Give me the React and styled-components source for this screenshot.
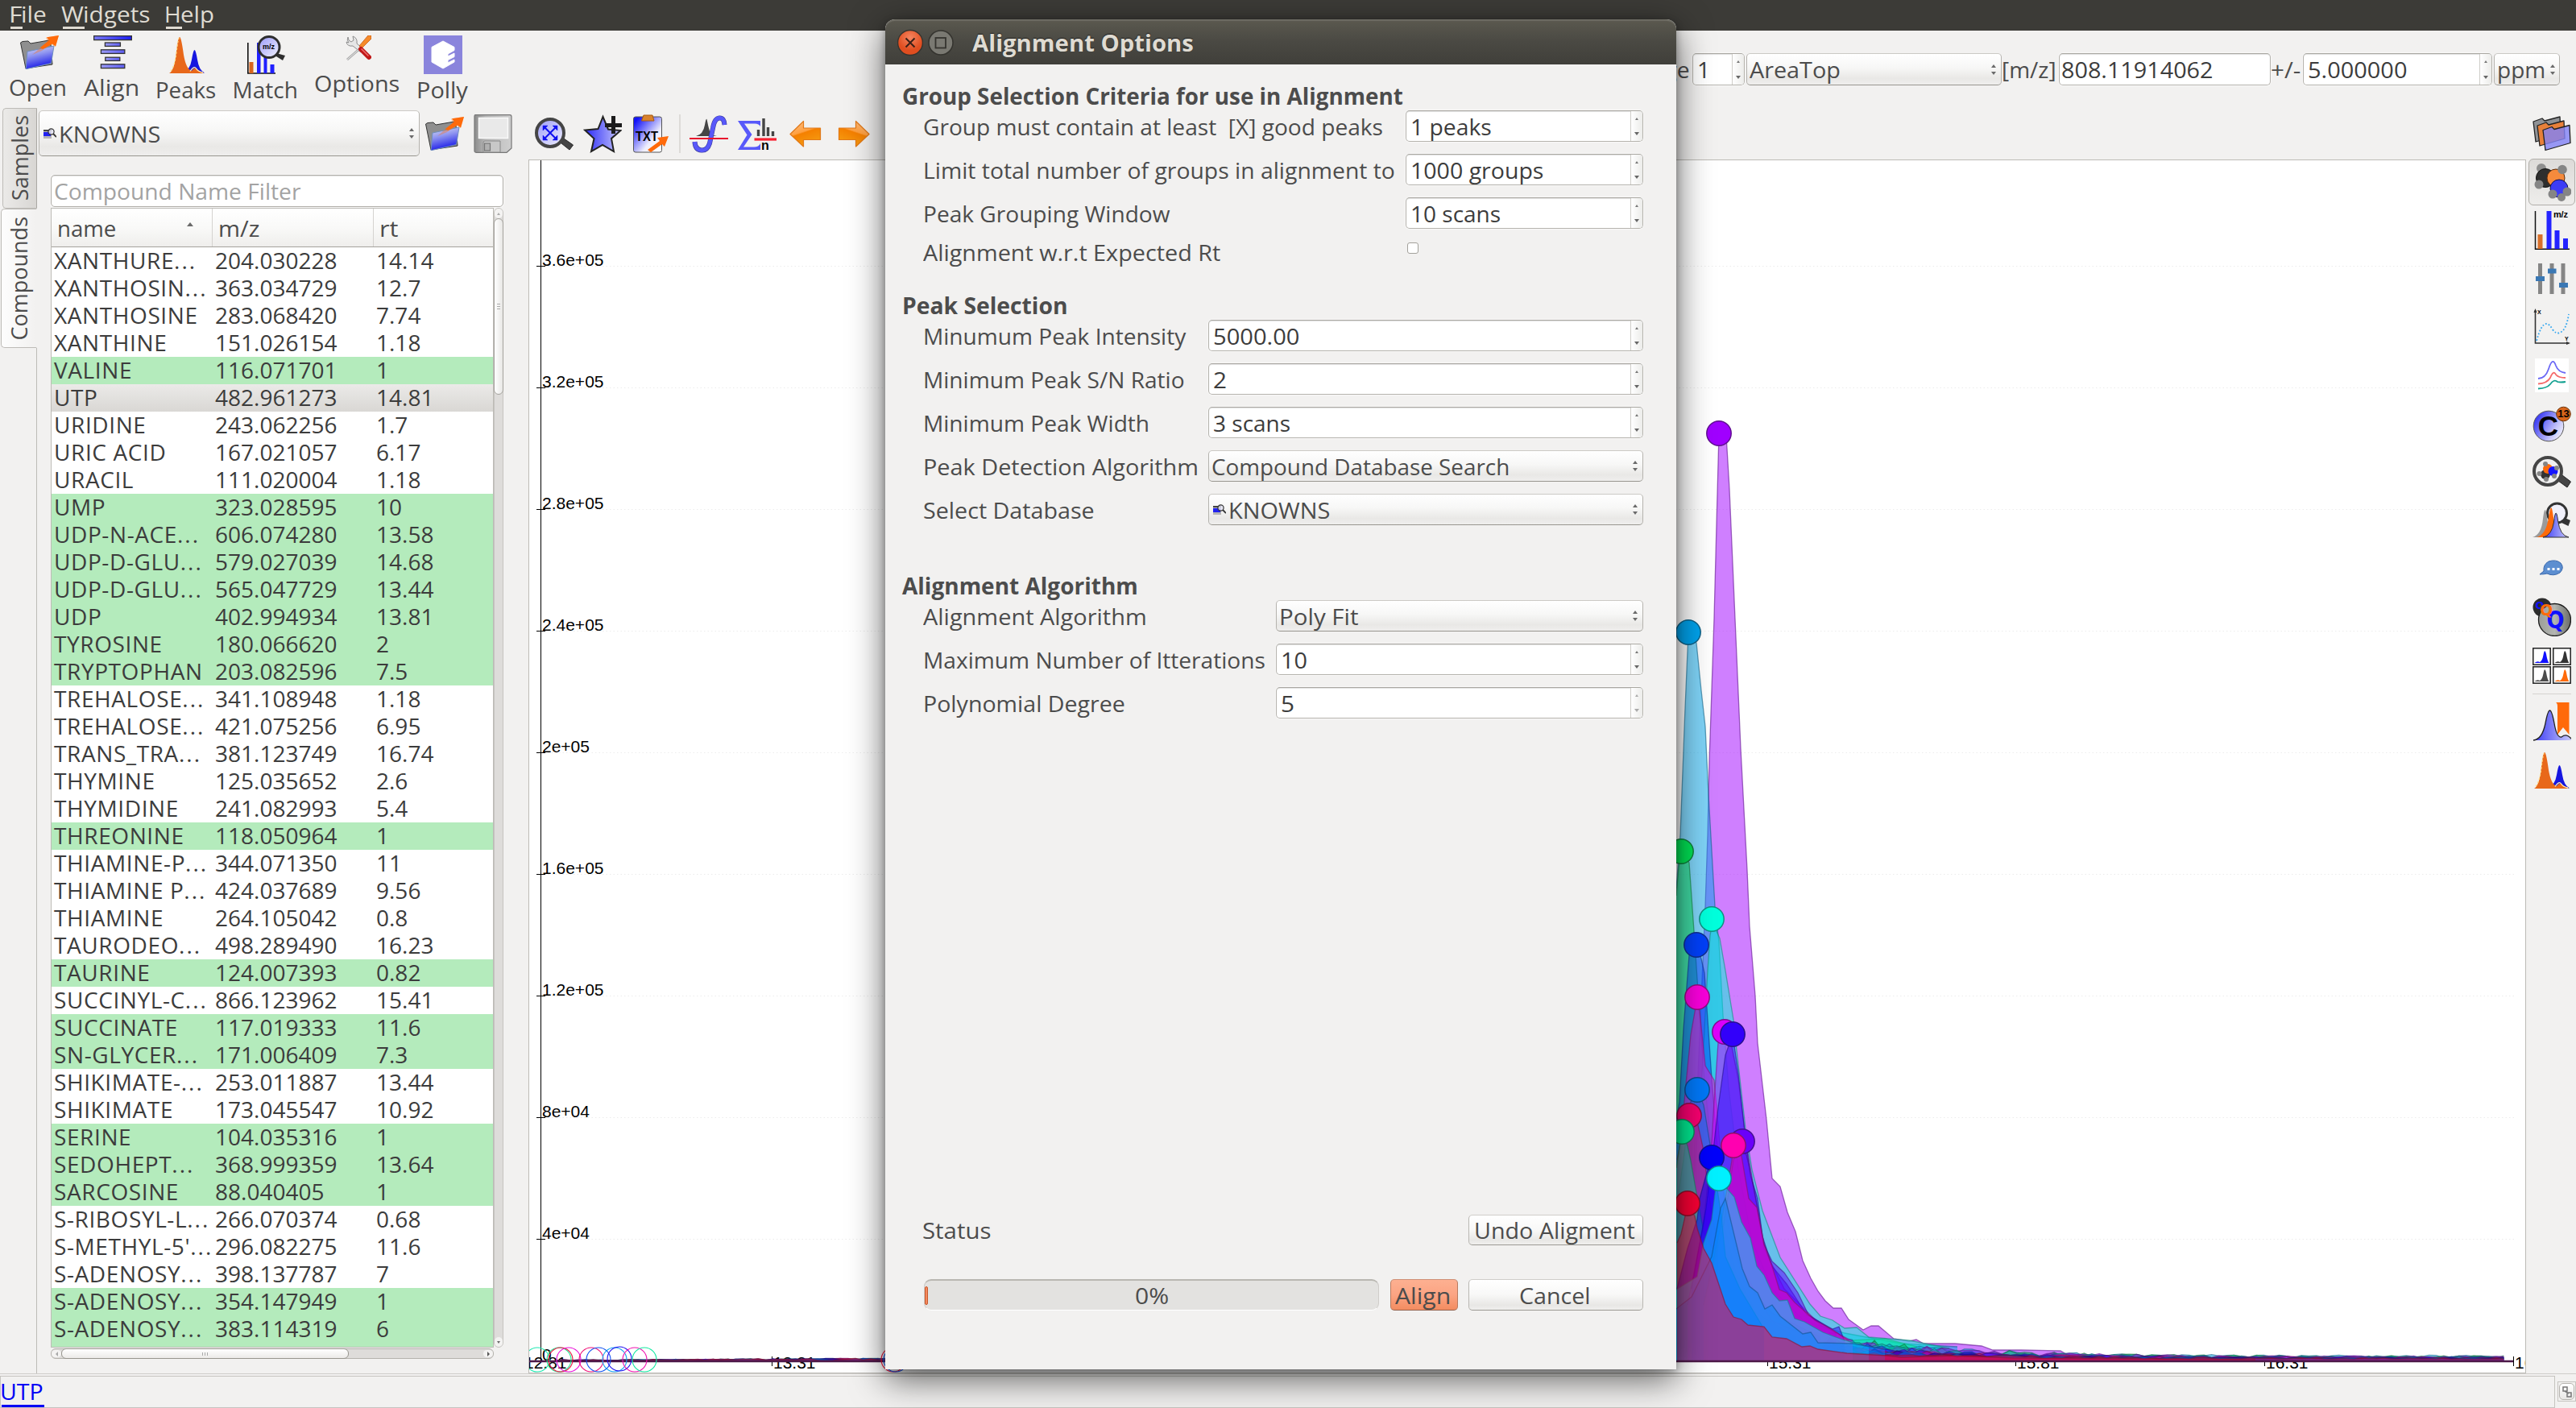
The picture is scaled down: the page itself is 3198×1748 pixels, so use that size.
import React, { useLayoutEffect, useRef, useState } from "react";
import styled, { createGlobalStyle, css } from "styled-components";

const UI_FONT = `"Open Sans", "Noto Sans", sans-serif`;

const GlobalStyle = createGlobalStyle`
  html, body { margin: 0; padding: 0; background: #f2f1f0; }
  *, *::before, *::after { box-sizing: border-box; }
`;

/* ---------- text that is condensed or widened to a fixed measure ---------- */

const FitBox = styled.span`
  display: block;
  flex: none;
  width: ${(p) => p.$w}px;
  white-space: pre;
`;
const FitInner = styled.span`
  display: inline-block;
  margin-left: -2px;
  transform-origin: 0 50%;
`;
function Fit({ w, children }) {
  const ref = useRef(null);
  const [scale, setScale] = useState(1);
  useLayoutEffect(() => {
    const natural = ref.current.offsetWidth;
    if (natural) setScale((w + 1) / natural);
  }, [w, children]);
  return (
    <FitBox $w={w}>
      <FitInner ref={ref} style={{ transform: `scaleX(${scale})` }}>{children}</FitInner>
    </FitBox>
  );
}

/* ---------- shell ---------- */

const Window = styled.div`
  position: relative;
  width: 3198px;
  height: 1748px;
  overflow: hidden;
  display: flex;
  flex-direction: column;
  background: #f2f1f0;
  color: #4c4c4c;
  font: 28px/36px ${UI_FONT};
`;
const MenuBar = styled.div`
  height: 38px;
  flex: none;
  display: flex;
  gap: 19px;
  padding-left: 13px;
  background: #3c3b37;
  color: #dfdbd2;
  line-height: 35px;
`;
const MenuItem = styled.div`
  display: flex;
  height: 38px;
`;
const Mnemonic = styled.div`
  border-bottom: 3px solid #dfdbd2;
  height: 36px;
`;
const TopBar = styled.div`
  height: 96px;
  flex: none;
  display: flex;
  justify-content: space-between;
`;
const Actions = styled.div`
  display: flex;
  gap: 21.500px;
  padding: 6px 0 0 13px;
`;
const ActionItem = styled.div`
  display: flex;
  flex-direction: column;
  align-items: center;
  gap: ${(p) => p.$gap}px;
`;
const Controls = styled.div`
  display: flex;
  padding: 28px 20px 0 0;
  height: 68px;
  align-items: center;
  gap: 2px;
`;
const Body = styled.div`
  flex: 1;
  display: flex;
  min-height: 0;
`;

/* ---------- form controls ---------- */

const Field = styled.div`
  display: flex;
  flex: none;
  width: ${(p) => (p.$w ? p.$w + "px" : "auto")};
  height: ${(p) => p.$h || 40}px;
  padding-left: ${(p) => p.$pad || 7}px;
  align-items: center;
  justify-content: space-between;
  background: #fff;
  color: #3c3c3c;
  border: 1px solid #b5b3ad;
  border-top-color: #a9a7a1;
  border-radius: 5px;
  box-shadow: 0 0 0 1px rgba(255, 255, 255, 0.5), inset 0 1px 1px rgba(0, 0, 0, 0.12);
`;
const StepBox = styled.div`
  width: 15px;
  height: 100%;
  flex: none;
  display: flex;
  flex-direction: column;
  align-items: center;
  justify-content: space-between;
  padding: 8px 0 7px;
  border-left: 1px solid #cfcdc9;
  border-radius: 0 4px 4px 0;
  background: linear-gradient(90deg, #fff, #ececea);
`;
const Tri = styled.i`
  width: 0;
  height: 0;
  border: ${(p) => p.$s || 3}px solid transparent;
  ${(p) => (p.$down
    ? css`border-bottom-width: 0; border-top: ${(p.$s || 3) + 1}px solid ${p.$c || "#6a6a6a"};`
    : css`border-top-width: 0; border-bottom: ${(p.$s || 3) + 1}px solid ${p.$c || "#6a6a6a"};`)}
`;
const Combo = styled.div`
  display: flex;
  flex: none;
  align-items: center;
  width: ${(p) => (p.$w ? p.$w + "px" : "auto")};
  height: ${(p) => p.$h || 40}px;
  padding: 0 ${(p) => p.$padR || 6}px 0 5px;
  gap: 5px;
  border: 1px solid #bdbbb6;
  border-color: #cbc9c5 #b5b3ae #98968f;
  border-radius: 5px;
  background: linear-gradient(#fff, #f7f7f6 45%, #e9e8e6 80%, #efeeed);
`;
const ComboArrows = styled.div`
  margin-left: auto;
  display: flex;
  flex-direction: column;
  gap: 5px;
`;
const Arrows = () => (
  <ComboArrows><Tri /><Tri $down /></ComboArrows>
);
function Spin({ w, h, dim, pad, children }) {
  return (
    <Field $w={w} $h={h} $pad={pad}>
      {children}
      <StepBox>
        <Tri $s={2} $c={dim ? "#aaa" : "#777"} />
        <Tri $down $c={dim ? "#aaa" : "#666"} />
      </StepBox>
    </Field>
  );
}
const Push = styled.button`
  display: flex;
  align-items: center;
  justify-content: center;
  width: ${(p) => p.$w}px;
  height: ${(p) => p.$h}px;
  padding: 0;
  font: inherit;
  color: inherit;
  text-align: left;
  border: 1px solid;
  border-radius: 5px;
  ${(p) => (p.$primary
    ? css`border-color: #cf8f76 #b87a60 #93624e; background: linear-gradient(#fdb091, #fba483 50%, #f38c60);`
    : css`border-color: #cfcdc9 #b9b7b2 #9b9993; background: linear-gradient(#fff, #f8f8f7 50%, #e8e7e5 85%, #f0efee);`)}
`;

/* ---------- icons ---------- */

const Svg = ({ w = 48, h = 48, box, children }) => (
  <svg width={w} height={h} viewBox={box || `0 0 ${w} ${h}`} style={{ display: "block", flex: "none" }}>{children}</svg>
);
const Defs = () => (
  <svg width="0" height="0" style={{ position: "absolute" }}>
    <defs>
      <linearGradient id="blueUp" x1="0" y1="0" x2="0.3" y2="1"><stop offset="0" stopColor="#dfe3f6" /><stop offset="0.45" stopColor="#8f95f0" /><stop offset="1" stopColor="#1a1ae8" /></linearGradient>
      <linearGradient id="bar" x1="0" x2="1"><stop offset="0" stopColor="#7a7af5" /><stop offset="1" stopColor="#1c1cf5" /></linearGradient>
      <linearGradient id="barPale" x1="0" x2="1"><stop offset="0" stopColor="#9a9af8" /><stop offset="1" stopColor="#5f5ff4" /></linearGradient>
      <linearGradient id="lens" x1="0" x2="1" y2="1"><stop offset="0" stopColor="#9a9af8" /><stop offset="1" stopColor="#f2f2fd" /></linearGradient>
      <linearGradient id="star" x1="0" x2="1"><stop offset="0" stopColor="#2a2af8" /><stop offset="1" stopColor="#c8c8fa" /></linearGradient>
      <linearGradient id="clip" x1="0" x2="1" y2="1"><stop offset="0.1" stopColor="#1414f8" /><stop offset="0.65" stopColor="#eeeefc" /><stop offset="1" stopColor="#fff" /></linearGradient>
      <linearGradient id="orange" x1="0" x2="0.4" y2="1"><stop offset="0" stopColor="#ffc18a" /><stop offset="0.5" stopColor="#ffa040" /><stop offset="0.55" stopColor="#f58000" /><stop offset="1" stopColor="#f59a10" /></linearGradient>
      <linearGradient id="cdisc" x1="0" x2="1" y2="0.6"><stop offset="0" stopColor="#1414f0" /><stop offset="0.8" stopColor="#c6c6fa" /><stop offset="1" stopColor="#e6e6fa" /></linearGradient>
      <linearGradient id="grayDisc" x1="0" x2="1"><stop offset="0" stopColor="#9a9c98" /><stop offset="0.5" stopColor="#b4b6b2" /><stop offset="1" stopColor="#6a6c68" /></linearGradient>
      <linearGradient id="blueSide" x1="0" x2="1"><stop offset="0" stopColor="#3a3af5" /><stop offset="1" stopColor="#c8c8fa" /></linearGradient>
      <linearGradient id="disk" x1="0" x2="1"><stop offset="0" stopColor="#8c8c8c" /><stop offset="0.3" stopColor="#b8b8b8" /><stop offset="1" stopColor="#cfcfcf" /></linearGradient>
      <radialGradient id="redBtn" cy="0.3"><stop offset="0" stopColor="#f58560" /><stop offset="1" stopColor="#e04e20" /></radialGradient>
    </defs>
  </svg>
);
const OpenIcon = ({ h = 42 }) => (
  <Svg h={h} box={`0 0 48 ${h}`}>
    <path d="M0.5 9 L3 7.5 L10 7 L13 10 L36 6 L38 10 L40 36 L7 41 Z" fill="#8f8f8f" stroke="#333" strokeWidth="1" />
    <path d="M9 20 L42 13 L38.5 34.5 L7 41.8 Z" fill="url(#blueUp)" stroke="#6f8fc0" strokeWidth="1" />
    <path d="M15 24 Q20 20 25 15 L34 8 L32 2.500 L48 0 L44 14 L39 11 L27 19 Q20 22 15 24 Z" fill="#ff6a0a" fillOpacity="0.35" />
    <path d="M25 15 L36 6 L33 2.200 L48 0 L44 13.500 L40 10.500 L28 17 Z" fill="#ff6a0a" />
  </Svg>
);
const AlignIcon = () => (
  <Svg h={42}>
    <g stroke="#333" strokeWidth="1.3">
      <rect x="0.6" y="0.6" width="46.800" height="5" fill="url(#bar)" />
      <rect x="14.400" y="9" width="19" height="4.400" fill="url(#barPale)" />
      <rect x="9.400" y="17.800" width="29.400" height="4.600" fill="url(#barPale)" />
      <rect x="14.800" y="27.200" width="18" height="4.200" fill="url(#barPale)" />
      <rect x="9.400" y="35.800" width="29.400" height="4.800" fill="url(#barPale)" />
    </g>
  </Svg>
);
const PeaksIcon = () => (
  <Svg>
    <path d="M20 46 Q28 42 30 30 Q32 18 33.500 18 Q35 18 37 30 Q39 43 46 46.500 Z" fill="#1616e0" />
    <path d="M2 47 Q8 44 10.500 24 Q13 2 15 2 Q17 2 20 24 Q23 42 30 44 Q34 38 38 43 L45 47 Z" fill="#e8681a" />
    <path d="M4 44 Q9 38 11 21 Q13 4 14.500 3" fill="none" stroke="#ffe08a" strokeWidth="1.200" strokeDasharray="2.500 2" />
    <path d="M28 44.500 Q33 37 35.500 41 Q38 45 44 46" fill="none" stroke="#fff0b8" strokeWidth="1.300" />
  </Svg>
);
const MatchIcon = () => (
  <Svg>
    <path d="M0.800 9 V47 H35" fill="none" stroke="#111" strokeWidth="1.600" />
    <rect x="2.500" y="33" width="5" height="14" fill="#d8651e" />
    <rect x="12" y="9" width="4.500" height="38" fill="#2020ff" />
    <rect x="20.500" y="26" width="4" height="21" fill="#2020ff" />
    <rect x="28.500" y="36" width="5" height="11" fill="#2020ff" />
    <path d="M36 22 L47 25 L44 31 L36 26 Z" fill="#2e2e2e" />
    <circle cx="27" cy="14.500" r="13" fill="url(#lens)" stroke="#2e2e2e" strokeWidth="3" />
    <text x="26.500" y="17" textAnchor="middle" fontFamily="Liberation Sans, sans-serif" fontWeight="700" fontSize="9">m/z</text>
  </Svg>
);
const OptionsIcon = () => (
  <Svg w={32} h={32}>
    <path d="M3 2 Q1 6 4 9 L1 8 Q2 14 9 13 L19 21 L22 17 L14 10 Q15 3 9 1 L10 6 L7 8 L4 6 Z" fill="#e6e6e6" stroke="#8e8e8e" strokeWidth="1" />
    <path d="M17 17 L2 30" stroke="#9a9a9a" strokeWidth="2.800" />
    <path d="M17 17 L2 30" stroke="#dcdcdc" strokeWidth="1.200" />
    <path d="M17 13 L28 0 L32 0 L32 4 L20 16 Z" fill="#f58a2a" stroke="#c85a10" strokeWidth="0.800" />
    <path d="M19 17 L29 27" stroke="#c01818" strokeWidth="6" strokeLinecap="round" />
    <path d="M20 17 L28 25" stroke="#f07070" strokeWidth="1.500" strokeLinecap="round" />
  </Svg>
);
const PollyIcon = () => (
  <Svg>
    <rect width="48" height="48" fill="#8a84dc" />
    <path d="M24 7 L38 14.500 V18.500 L30 23 V26 L38 22 V26.500 L30 30.500 V34 L38 30 V33 L24 41 L10 33 V14.500 Z" fill="#fff" stroke="#fff" strokeLinejoin="round" />
  </Svg>
);
const DiskIcon = () => (
  <Svg>
    <path d="M2 0.700 H45 Q47 0.700 47 3 V42 L41 47.300 H3 Q1 47.300 1 45 V3 Q1 0.700 2 0.700 Z" fill="url(#disk)" stroke="#777" strokeWidth="1.200" />
    <rect x="6.500" y="4.500" width="36" height="25" fill="#e9e9e9" stroke="#fafafa" strokeWidth="1.500" />
    <path d="M12 47 V35 Q12 33 14 33 H33 V47 Z" fill="#c8c8c8" stroke="#888" strokeWidth="1" />
    <rect x="13.500" y="36" width="7" height="9" fill="#b0b0b0" stroke="#777" strokeWidth="1.200" />
  </Svg>
);
const DbIcon = () => (
  <Svg w={16} h={14}>
    <rect x="0" y="2" width="10" height="11" fill="#b5b5b5" />
    <rect x="0" y="2" width="10" height="2" fill="#444" />
    <rect x="0" y="5" width="9" height="5" fill="#2222f0" />
    <circle cx="9.500" cy="4.500" r="3.600" fill="#e4e4f4" fillOpacity="0.8" stroke="#333" strokeWidth="1.200" />
    <path d="M12 7 L16 11" stroke="#333" strokeWidth="1.800" />
  </Svg>
);
const ZoomIcon = () => (
  <Svg>
    <path d="M36 30 L47.500 38 L43 44 L33 36 Z" fill="#454545" stroke="#2a2a2a" />
    <circle cx="19" cy="23" r="17" fill="url(#lens)" stroke="#454545" strokeWidth="4" />
    <g fill="#1010f0" stroke="#1010f0" strokeWidth="2">
      <path d="M12 16 L26 30 M26 16 L12 30" />
      <path d="M10 14 h6 l-6 6 Z M28 14 h-6 l6 6 Z M10 32 h6 l-6 -6 Z M28 32 h-6 l6 -6 Z" strokeWidth="0.500" />
    </g>
  </Svg>
);
const StarIcon = () => (
  <Svg>
    <path d="M24.500 3 L31 18.500 L46.500 20 L35 30 L38 46 L24 38 L10 46 L13.500 30 L2 19.500 L18.500 18 Z" fill="url(#star)" stroke="#222" strokeWidth="2" />
    <path d="M37.500 2 V24 M27 13.500 H48" stroke="#1c1c1c" strokeWidth="5" />
  </Svg>
);
const TxtIcon = () => (
  <Svg>
    <rect x="2.500" y="3" width="35" height="44" rx="2.500" fill="url(#clip)" stroke="#555" strokeWidth="1" />
    <path d="M15 1 H26 L28 8 H12.500 Z" fill="#d9822c" stroke="#a85a10" strokeWidth="1" />
    <text x="19" y="33" textAnchor="middle" fontFamily="Liberation Sans, sans-serif" fontWeight="700" fontSize="17" textLength="28" lengthAdjust="spacingAndGlyphs">TXT</text>
    <path d="M20 44 L35 33 L32 29 L46 27 L41 40 L38 37 L24 47 Z" fill="#ff6a0a" />
  </Svg>
);
const IntegralIcon = () => (
  <Svg>
    <path d="M8 27 Q17 25 19 13 Q20.500 4 21.500 6 Q23 14 25 21 Q27 26 34 27 Z" fill="#454545" />
    <path d="M6.500 34 Q7 44 15 44.500 Q22 45 25 36 L29 17 Q31 5 37 4.500 Q43 4 43.500 13" fill="none" stroke="#3a3a9c" strokeWidth="6" />
    <path d="M6.500 34 Q7 44 15 44.500 Q22 45 25 36 L29 17 Q31 5 37 4.500 Q43 4 43.500 13" fill="none" stroke="#5858fa" strokeWidth="4.800" />
    <path d="M0 30 H48" stroke="#e8142c" strokeWidth="2" />
  </Svg>
);
const SigmaIcon = () => (
  <Svg>
    <path d="M0 8 H28 V15 Q26 11 20 11.500 H8 L17.500 25 L7 40.500 H20 Q26 40.500 28 36 V44 H0 L11.500 25.500 Z" fill="#5858fa" />
    <path d="M25.500 19 V27 M32 5 V27 M37.500 16 V27 M43.500 21 V27" stroke="#454545" strokeWidth="3.400" />
    <path d="M20.500 31 H48" stroke="#f82030" strokeWidth="3.200" />
    <text x="34" y="44" textAnchor="middle" fontFamily="Liberation Sans, sans-serif" fontWeight="700" fontSize="16">n</text>
  </Svg>
);
const ArrowIcon = ({ flip }) => (
  <Svg>
    <g transform={flip ? "translate(48 0) scale(-1 1)" : undefined}>
      <path d="M5 24.500 L21.500 8.500 V17 H42.500 V31.500 H21.500 V40 Z" fill="url(#orange)" stroke="#e07818" strokeWidth="1.200" strokeLinejoin="round" />
    </g>
  </Svg>
);
const FoldersIcon = () => {
  const d = "M0 6 L11 2 L14 5 L33 0 L34 22 L3 31 Z";
  return (
    <Svg>
      <g stroke="#222" strokeWidth="1.300" strokeLinejoin="round">
        <path d={d} fill="#909296" transform="translate(1 3)" />
        <path d={d} fill="#e8803a" transform="translate(6 8)" />
        <path d={d} fill="#8282f5" fillOpacity="0.82" transform="translate(13 13.500)" />
      </g>
    </Svg>
  );
};
const MoleculeIcon = () => (
  <Svg>
    <circle cx="11" cy="7" r="6" fill="#8f8f8f" />
    <circle cx="16" cy="19" r="11.500" fill="#2e2e2e" stroke="#111" />
    <circle cx="29" cy="19" r="11" fill="#f58a3c" stroke="#5a2a08" />
    <circle cx="33" cy="32" r="11" fill="#3c3cf5" stroke="#111150" />
    <g fill="#858585"><circle cx="37" cy="8.500" r="5.800" /><circle cx="8" cy="27" r="5.500" /><circle cx="25" cy="39" r="5.500" /><circle cx="43" cy="36" r="5.500" /><circle cx="36" cy="43" r="5" /></g>
  </Svg>
);
const MzBarsIcon = () => (
  <Svg>
    <path d="M3.500 0 V47.300 H46" fill="none" stroke="#111" strokeWidth="1.500" />
    <rect x="6.500" y="29" width="6" height="18" fill="#d8702a" />
    <rect x="17.500" y="0" width="6" height="47" fill="#2424ff" />
    <rect x="27.500" y="24" width="6" height="23" fill="#2424ff" />
    <rect x="38" y="34" width="6" height="13" fill="#2424ff" />
    <text x="35" y="8" textAnchor="middle" fontFamily="Liberation Sans, sans-serif" fontWeight="700" fontSize="11" textLength="18">m/z</text>
  </Svg>
);
const SlidersIcon = () => (
  <Svg>
    <g fill="#858585"><rect x="7" y="5" width="5" height="38" /><rect x="21.500" y="5" width="5" height="38" /><rect x="35.500" y="5" width="5" height="38" /></g>
    <g fill="#3b78b4"><rect x="4" y="21" width="11" height="6" /><rect x="19" y="11.500" width="10.500" height="6" /><rect x="33" y="29" width="11" height="6" /></g>
  </Svg>
);
const XyIcon = () => (
  <Svg>
    <path d="M3.500 3 V44 H45" fill="none" stroke="#333" strokeWidth="1.600" />
    <path d="M1.500 6 L3.500 1 L5.500 6 Z M42 42 L47 44 L42 46 Z" fill="#333" />
    <path d="M5 41 Q11 20 17 20 Q21 20 25 27 Q29 33 34 31 Q42 28 45 8" fill="none" stroke="#38a8f0" strokeWidth="1.800" strokeDasharray="1.800 2.200" />
    <text x="6" y="8" fontFamily="Liberation Sans, sans-serif" fontWeight="700" fontSize="7">X</text>
    <text x="40" y="41" fontFamily="Liberation Sans, sans-serif" fontWeight="700" fontSize="7">Y</text>
  </Svg>
);
const CurvesIcon = () => (
  <Svg>
    <rect x="3" y="3" width="42" height="42" fill="#fff" />
    <g fill="none" strokeWidth="1.800">
      <path d="M7 28 Q16 28 20 16 Q25 0 29 12 Q32 20 41 21" stroke="#6a68f5" />
      <path d="M7 34.500 Q18 34 22 27 Q26 17 29 23 Q32 27 41 27" stroke="#f56a6a" />
      <path d="M7 40.500 Q18 40 22 35 Q27 28 31 32 Q35 33 41 32" stroke="#12a090" />
    </g>
  </Svg>
);
const C13Icon = () => (
  <Svg>
    <circle cx="20" cy="27" r="18.800" fill="url(#cdisc)" stroke="#555" strokeWidth="1" />
    <text x="19.500" y="38.500" textAnchor="middle" fontFamily="Liberation Sans, sans-serif" fontWeight="700" fontSize="35">C</text>
    <circle cx="38.500" cy="12" r="8.800" fill="#d8651a" stroke="#6a3208" strokeWidth="1" />
    <text x="38.500" y="16" textAnchor="middle" fontFamily="Liberation Sans, sans-serif" fontWeight="700" fontSize="13">13</text>
  </Svg>
);
const MoleculeZoomIcon = () => (
  <Svg>
    <path d="M37 28 L47.500 36 L43 43 L32 35 Z" fill="#454545" stroke="#222" />
    <circle cx="19" cy="23" r="17" fill="#f0f0f0" stroke="#454545" strokeWidth="4" />
    <circle cx="16" cy="27" r="6" fill="#333" />
    <circle cx="19" cy="20" r="6" fill="#ff6a0a" />
    <circle cx="25.500" cy="23" r="6" fill="#1414ff" />
    <g fill="#858585"><circle cx="16" cy="14" r="3" /><circle cx="8.500" cy="26" r="3" /><circle cx="17" cy="33" r="3" /><circle cx="30" cy="19" r="3" /><circle cx="27" cy="29" r="3" /></g>
  </Svg>
);
const PeakZoomIcon = () => (
  <Svg>
    <path d="M38 20 L47 24 L44.500 31 L36 27 Z" fill="#333" />
    <circle cx="30.500" cy="15" r="12" fill="#f0f0fa" stroke="#333" strokeWidth="3" />
    <path d="M0 45 Q11 42 13 22 Q15 5 17 14 L22 45 Z" fill="#9a9a9a" />
    <path d="M5 45 Q17 42 20 20 Q23 0 25 14 L30 45 Z" fill="#ff6a0a" />
    <path d="M13 45 Q24 43 26.500 26 Q29 5 31.500 24 Q34 43 45 45 Z" fill="url(#blueSide)" stroke="#333" strokeWidth="1" />
  </Svg>
);
const BubbleIcon = () => (
  <Svg>
    <path d="M14 27 L9 31 Q15 31 18 30 Q26 34 34 29 Q40 23 35 17 Q29 12 20 15 Q13 19 14 27 Z" fill="#5c8ed0" stroke="#3a68ac" strokeWidth="1" />
    <g fill="#fff"><rect x="18.500" y="23" width="3" height="3" /><rect x="24.500" y="23" width="3" height="3" /><rect x="30.500" y="23" width="3" height="3" /></g>
  </Svg>
);
const QIcon = () => (
  <Svg>
    <circle cx="12" cy="12" r="11.500" fill="#2c2c2c" />
    <circle cx="27.500" cy="27.500" r="20" fill="url(#grayDisc)" stroke="#1c1c1c" strokeWidth="1.300" />
    <g fontFamily="DejaVu Sans, sans-serif" fontWeight="700" textAnchor="middle">
      <text x="9" y="13.500" fontSize="13" fill="#1010ff">Q</text>
      <text x="28.500" y="38" fontSize="30" fill="#1010ff" textLength="22" lengthAdjust="spacingAndGlyphs">Q</text>
      <text x="17" y="22" fontSize="19" fill="#ff6a0a">Q</text>
    </g>
  </Svg>
);
const GridIcon = () => {
  const cell = (x, y, c) => (
    <g transform={`translate(${x} ${y})`}>
      <rect x="0.800" y="0.800" width="21.400" height="20.400" fill="#fff" stroke="#222" strokeWidth="1.500" />
      <path d="M2.500 19 Q6 16 9 18 Q12 17 13.500 9 Q15 0 17 8 Q18.500 17 20.500 19 Z" fill={c} />
    </g>
  );
  return (
    <Svg>
      {cell(0, 2, "#1010ff")}{cell(25, 2, "#333")}{cell(0, 25, "#4c4c4c")}{cell(25, 25, "#ff6a0a")}
    </Svg>
  );
};
const BookmarkIcon = () => (
  <Svg>
    <path d="M1 47 Q12 46 16 26 Q19 10 21.500 10 Q24 10 27 26 Q30 44 36 43 Q42 38 46 43 L48 46 V47 Z" fill="url(#blueSide)" />
    <path d="M1 47 Q12 46 16 26 Q19 10 21.500 10 Q24 10 27 26 Q30 44 36 43 Q42 38 48 45" fill="none" stroke="#222" strokeWidth="1.300" />
    <path d="M29 0 H45.500 V40 L38 31 L31 40 V5 Q31 1 29 0 Z" fill="#ff6a0a" />
  </Svg>
);

/* ---------- left dock ---------- */

const Dock = styled.div`
  width: 656px;
  flex: none;
  display: flex;
`;
const TabStrip = styled.div`
  width: 46px;
  flex: none;
  display: flex;
  flex-direction: column;
  align-items: flex-end;
`;
const Tab = styled.div`
  width: ${(p) => (p.$on ? 45 : 43)}px;
  height: ${(p) => p.$h}px;
  flex: none;
  display: flex;
  align-items: center;
  justify-content: center;
  border: 1px solid #bdbbb7;
  border-right-color: ${(p) => (p.$on ? "#f2f1f0" : "#aaa8a4")};
  border-radius: 5px 0 0 5px;
  background: ${(p) => (p.$on ? "linear-gradient(90deg,#fdfdfd,#f2f1f0)" : "linear-gradient(90deg,#ebeae8,#d8d6d3)")};
  font-size: 27px;
  line-height: 38px;
`;
const TabText = styled.span`
  writing-mode: vertical-rl;
  transform: rotate(180deg);
`;
const TabRest = styled.div`
  flex: 1;
  width: 1px;
  background: #bdbbb7;
`;
const Pane = styled.div`
  flex: 1;
  padding: 3px 0 0 2px;
  display: flex;
  flex-direction: column;
`;
const DbRow = styled.div`
  display: flex;
  align-items: center;
  height: 57px;
`;
const IconCell = styled.div`
  margin-left: ${(p) => p.$ml}px;
`;
const Browser = styled.div`
  margin: 23px 0 0 15px;
  width: 562px;
`;
const Filter = styled(Field)`
  color: #a3a3a3;
  border-color: #b0aea8;
`;
const TableFrame = styled.div`
  margin-top: 1px;
  display: flex;
  height: 1415px;
`;
const Table = styled.div`
  width: 550px;
  overflow: hidden;
  border: 1px solid #bdbbb6;
  background: #fff;
`;
const columns = css`
  display: grid;
  grid-template-columns: 200px 200px 1fr;
`;
const Head = styled.div`
  ${columns}
  height: 48px;
  border-bottom: 1px solid #a5a39d;
  background: linear-gradient(#fff, #f9f9f8 50%, #efeeec);
`;
const HeadCell = styled.div`
  display: flex;
  justify-content: space-between;
  padding: 6px 23px 0 9px;
  border-right: ${(p) => (p.$last ? 0 : 1)}px solid #d5d3d0;
`;
const SortMark = styled.div`
  padding-top: 11px;
  display: flex;
`;
const Row = styled.div`
  ${columns}
  height: 34px;
  padding-left: 3px;
  line-height: 33px;
  color: #3c3c3c;
  white-space: pre;
  background: ${(p) => (p.$tone === "g" ? "#b4ebbc" : p.$tone === "s" ? "linear-gradient(#ebeae8,#d9d7d4)" : "#fff")};
`;
const Name = styled.span`
  letter-spacing: 0.6px;
`;
const Dots = styled.span`
  letter-spacing: 2px;
`;
const VScroll = styled.div`
  width: 12px;
  display: flex;
  flex-direction: column;
  align-items: center;
  justify-content: space-between;
  border: 1px solid #c6c4c0;
  border-radius: 6px;
  background: #dedcda;
`;
const ScrollCap = styled.div`
  flex: none;
  width: ${(p) => (p.$h ? 12 : 10)}px;
  height: ${(p) => (p.$h ? 9 : 12)}px;
  display: flex;
  align-items: center;
  justify-content: center;
  border-radius: 5px;
  background: #f4f3f2;
`;
const VThumb = styled.div`
  width: 12px;
  height: 219px;
  margin-bottom: auto;
  display: flex;
  align-items: center;
  justify-content: center;
  border: 1px solid #a5a39e;
  border-radius: 6px;
  background: linear-gradient(90deg, #fff, #e8e7e5);
`;
const Grip = styled.div`
  width: ${(p) => (p.$v ? 4 : 8)}px;
  height: ${(p) => (p.$v ? 8 : 4)}px;
  background: repeating-linear-gradient(${(p) => (p.$v ? "180deg" : "90deg")}, #aaa 0 1px, transparent 1px 3px);
`;
const HScroll = styled.div`
  margin-top: 1px;
  width: 550px;
  height: 13px;
  display: flex;
  align-items: center;
  border: 1px solid #b5b3ae;
  border-radius: 6px;
  background: #dedcda;
`;
const HThumb = styled.div`
  width: 357px;
  height: 13px;
  flex: none;
  display: flex;
  align-items: center;
  justify-content: center;
  margin-right: auto;
  border: 1px solid #98968f;
  border-radius: 6px;
  background: linear-gradient(#fff, #eceae8);
`;
const SideTri = styled.i`
  width: 0;
  height: 0;
  border: 3px solid transparent;
  ${(p) => (p.$left
    ? css`border-left-width: 0; border-right: 3px solid #aaa;`
    : css`border-right-width: 0; border-left: 3px solid #555;`)}
`;

const ROWS = `XANTHURE…|204.030228|14.14|
XANTHOSIN…|363.034729|12.7|
XANTHOSINE|283.068420|7.74|
XANTHINE|151.026154|1.18|
VALINE|116.071701|1|g
UTP|482.961273|14.81|s
URIDINE|243.062256|1.7|
URIC ACID|167.021057|6.17|
URACIL|111.020004|1.18|
UMP|323.028595|10|g
UDP-N-ACE…|606.074280|13.58|g
UDP-D-GLU…|579.027039|14.68|g
UDP-D-GLU…|565.047729|13.44|g
UDP|402.994934|13.81|g
TYROSINE|180.066620|2|g
TRYPTOPHAN|203.082596|7.5|g
TREHALOSE…|341.108948|1.18|
TREHALOSE…|421.075256|6.95|
TRANS_TRA…|381.123749|16.74|
THYMINE|125.035652|2.6|
THYMIDINE|241.082993|5.4|
THREONINE|118.050964|1|g
THIAMINE-P…|344.071350|11|
THIAMINE P…|424.037689|9.56|
THIAMINE|264.105042|0.8|
TAURODEO…|498.289490|16.23|
TAURINE|124.007393|0.82|g
SUCCINYL-C…|866.123962|15.41|
SUCCINATE|117.019333|11.6|g
SN-GLYCER…|171.006409|7.3|g
SHIKIMATE-…|253.011887|13.44|
SHIKIMATE|173.045547|10.92|
SERINE|104.035316|1|g
SEDOHEPT…|368.999359|13.64|g
SARCOSINE|88.040405|1|g
S-RIBOSYL-L…|266.070374|0.68|
S-METHYL-5'…|296.082275|11.6|
S-ADENOSY…|398.137787|7|
S-ADENOSY…|354.147949|1|g
S-ADENOSY…|383.114319|6|g
|||g`.split("\n").map((l) => l.split("|"));

/* ---------- chart ---------- */

const Center = styled.div`
  width: 2480px;
  flex: none;
  display: flex;
  flex-direction: column;
`;
const ChartTools = styled.div`
  height: 64px;
  flex: none;
  display: flex;
  align-items: center;
  gap: 12px;
  padding-left: 8px;
`;
const ToolRule = styled.div`
  width: 2px;
  height: 48px;
  background: #dddbd8;
  margin: 0 -1px;
`;
const ChartFrame = styled.div`
  flex: 1;
  border: 1px solid #bdbbb6;
  background: #fff;
  display: flex;
  overflow: hidden;
`;

const BASE = 1690;
const PEAKS = [
  ["#a000ff", "2082,1660 2090,1610 2100,1500 2106,1380 2112,1240 2117,1125 2120,1036 2122,946 2125,857 2128,768 2131,652 2134,538 2143,540 2147,607 2154,768 2161,929 2169,1080 2172,1150 2179,1236 2182,1295 2193,1390 2200,1463 2210,1473 2219,1505 2229,1529 2238,1565 2248,1587 2257,1603 2266,1615 2276,1624 2286,1624 2295,1638 2313,1651 2323,1646 2332,1646 2351,1662 2370,1665 2379,1663 2388,1668 2427,1668 2460,1671 2474,1676 2509,1676 2558,1677 2565,1681 2620,1684 2700,1686"],
  ["#00a8f0", "2081,1103 2086,1036 2092,879 2096,785 2106,798 2112,857 2117,902 2121,987 2129,1125 2134,1170 2139,1260 2146,1350 2158,1450 2175,1540 2200,1600 2240,1640 2290,1655 2360,1668 2430,1672"],
  ["#00e050", "2081,1112 2084,1076 2088,1057 2097,1071 2103,1156 2108,1230 2116,1340 2130,1480 2150,1570 2190,1630 2230,1650 2300,1664 2340,1662 2380,1672"],
  ["#00ffd8", "2082,1560 2100,1500 2112,1350 2120,1205 2123,1161 2127,1141 2131,1156 2135,1165 2142,1205 2152,1266 2155,1295 2167,1401 2175,1452 2188,1503 2210,1561 2247,1619 2260,1634 2275,1639 2290,1649 2305,1648 2320,1660 2370,1664 2420,1674"],
  ["#0040ff", "2081,1390 2085,1368 2090,1277 2097,1186 2106,1173 2112,1190 2116,1208 2120,1266 2125,1339 2132,1423 2145,1520 2165,1590 2200,1630 2260,1660"],
  ["#ff00d8", "2082,1450 2088,1400 2093,1346 2099,1285 2106,1245 2110,1255 2117,1323 2128,1341 2132,1386 2140,1480 2160,1570 2200,1640 2260,1665"],
  ["#0078f8", "2081,1500 2090,1440 2098,1370 2107,1353 2115,1372 2123,1421 2135,1500 2155,1580 2180,1630 2230,1660"],
  ["#f80070", "2082,1440 2090,1400 2097,1385 2108,1397 2114,1424 2124,1500 2135,1560 2155,1620 2200,1660"],
  ["#00e890", "2081,1450 2088,1405 2095,1423 2099,1441 2106,1481 2115,1530 2128,1555 2145,1620 2180,1660"],
  ["#d800ff", "2095,1620 2115,1520 2125,1419 2128,1368 2133,1295 2141,1280 2150,1300 2158,1340 2168,1420 2180,1490 2190,1550 2215,1600 2260,1645 2300,1665"],
  ["#3000ff", "2100,1600 2118,1500 2128,1419 2133,1375 2142,1310 2151,1284 2158,1332 2166,1405 2173,1459 2182,1488 2188,1535 2200,1572 2218,1594 2243,1632 2275,1650 2283,1647 2290,1665"],
  ["#6800ff", "2120,1600 2140,1520 2152,1440 2164,1417 2172,1450 2182,1500 2190,1545 2200,1566 2215,1580 2232,1605 2245,1632 2280,1655"],
  ["#ff00b0", "2115,1620 2135,1530 2150,1441 2152,1422 2162,1435 2171,1488 2181,1499 2190,1545 2200,1572 2209,1601 2218,1605 2228,1617 2253,1639 2277,1652 2300,1668"],
  ["#0000ff", "2082,1600 2095,1550 2107,1514 2110,1488 2118,1459 2125,1437 2131,1470 2137,1510 2142,1560 2160,1600 2190,1650"],
  ["#00f0ff", "2081,1601 2107,1585 2115,1543 2125,1514 2130,1474 2134,1463 2145,1477 2153,1486 2162,1517 2173,1537 2181,1572 2190,1583 2200,1605 2209,1615 2219,1614 2228,1637 2240,1641 2263,1654 2287,1663 2320,1672"],
  ["#0088ff", "2081,1625 2100,1610 2125,1560 2136,1500 2142,1488 2150,1521 2163,1575 2172,1597 2182,1605 2191,1625 2200,1620 2210,1634 2238,1656 2248,1654 2257,1667 2300,1668 2340,1675"],
  ["#ff0038", "2082,1543 2087,1532 2092,1510 2095,1494 2104,1510 2107,1525 2115,1550 2125,1568 2142,1619 2152,1635 2162,1638 2170,1645 2190,1647 2200,1660 2218,1662 2237,1672 2247,1671 2257,1675 2293,1680 2343,1683 2360,1685 2427,1683 2500,1686 2800,1688"],
];
const MARKS = [
  [2134, 538, "#a000ff"], [2096, 785, "#00a4ee"], [2087, 1057, "#00e455"], [2125, 1141, "#00ffdc"], [2106, 1173, "#0040fa"],
  [2107, 1238, "#fa00dc"], [2107, 1353, "#0078f8"], [2097, 1385, "#f80070"], [2088, 1405, "#00e890"], [2141, 1281, "#dc00fa"],
  [2151, 1284, "#3200fa"], [2163, 1417, "#6a00fa"], [2152, 1422, "#ff00b0"], [2125, 1437, "#0000fa"], [2134, 1463, "#00f0ff"], [2095, 1494, "#f80034"],
];
const RINGS = [
  [667, 1688, "#1ce8b0"], [694, 1688, "#1ce890"], [696, 1688, "#f01040"], [706, 1688, "#e810d8"], [734, 1688, "#f01078"], [743, 1688, "#1050f0"],
  [763, 1688, "#10a0f0"], [769, 1687, "#2010f0"], [788, 1688, "#f010b0"], [800, 1688, "#10e8a0"], [1109, 1688, "#f01040"], [1112, 1688, "#1050f0"],
];
function rng(seed) {
  let s = seed;
  return () => ((s = (s * 16807) % 2147483647) / 2147483647);
}
const TAIL_COLORS = ["#00a8f0", "#00c060", "#a000ff", "#00b8b0", "#0040ff", "#ff00d8", "#3000ff", "#d00070", "#0000c0", "#0078f8", "#e00038"];
const TAILS = TAIL_COLORS.map((c, i) => {
  const r = rng(311 + i * 97);
  const pts = [];
  for (let x = 2262; x <= 3112; x += 9.3) {
    const env = 6 + 30 * Math.exp(-(x - 2262) / 150);
    const k = 1 - i * 0.055;
    pts.push(`${x.toFixed(1)},${(BASE - 1 - env * k * (0.5 + 0.55 * r())).toFixed(1)}`);
  }
  return [c, pts.join(" ")];
});
const HUM = TAIL_COLORS.map((c, i) => {
  const r = rng(77 + i * 53);
  const pts = [];
  for (let x = 690; x <= 1140; x += 9.3) pts.push(`${x.toFixed(1)},${(BASE - 0.5 - (1 + (x - 690) / 240) * r() * 1.3).toFixed(1)}`);
  return [c, pts.join(" ")];
});
const closed = (pts) => {
  const list = pts.split(" ");
  const x0 = list[0].split(",")[0];
  const x1 = list[list.length - 1].split(",")[0];
  return `${x0},${BASE} ${pts} ${x1},${BASE}`;
};
const dark = (c) => `color-mix(in srgb, ${c} 50%, #202020)`;
const Area = ({ c, pts }) => (
  <g>
    <polygon points={closed(pts)} fill={c} fillOpacity="0.5" />
    <polyline points={pts} fill="none" stroke={dark(c)} strokeOpacity="0.6" strokeWidth="1.300" />
  </g>
);
const Y_LABELS = ["0", "4e+04", "8e+04", "1.2e+05", "1.6e+05", "2e+05", "2.4e+05", "2.8e+05", "3.2e+05", "3.6e+05"];
const X_LABELS = [[650, "12.81"], [959, "13.31"], [1268, "13.81"], [1577, "14.31"], [1886, "14.81"], [2195, "15.31"], [2503, "15.81"], [2812, "16.31"], [3121, "16.81"]];

function Chart() {
  return (
    <svg width="2478" height="1505" viewBox="657 199 2478 1505">
      {Y_LABELS.map((_, i) => i > 0 && (
        <path key={i} d={`M676 ${1689.5 - i * 151} H3121`} stroke="#ececec" strokeWidth="1" strokeDasharray="1.500 3" />
      ))}
      <g fontFamily="Liberation Sans, Arial, sans-serif" fontSize="21" fill="#000">
        <path d="M671.500 199 V1690" stroke="#000" strokeWidth="1" />
        {Y_LABELS.map((t, i) => (
          <g key={t}>
            <path d={`M666 ${1689.5 - i * 151} H677`} stroke="#000" strokeWidth="1" />
            <text x="673" y={1689 - i * 151}>{t}</text>
          </g>
        ))}
        {X_LABELS.map(([x, t]) => (
          <g key={t}>
            <path d={`M${x - 0.5} 1684 V1696`} stroke="#000" strokeWidth="1" />
            <text x={x + 1} y="1699">{t}</text>
          </g>
        ))}
      </g>
      <rect x="2082" y="1680" width="1036" height="9" fill="#fff" />
      {PEAKS.slice(0, 4).map(([c, pts], i) => <Area key={i} c={c} pts={pts} />)}
      {TAILS.map(([c, pts], i) => <Area key={"t" + i} c={c} pts={pts} />)}
      {PEAKS.slice(4).map(([c, pts], i) => <Area key={i} c={c} pts={pts} />)}
      {HUM.map(([c, pts], i) => <Area key={"h" + i} c={c} pts={pts} />)}
      <path d="M657 1690 H3120" stroke="#4c1848" strokeWidth="2.400" />
      {RINGS.map(([x, y, c], i) => <circle key={i} cx={x} cy={y} r="15" fill="none" stroke={c} strokeWidth="1.100" />)}
      {MARKS.map(([x, y, c], i) => <circle key={i} cx={x} cy={y} r="15.200" fill={c} stroke={dark(c)} strokeWidth="1.500" />)}
    </svg>
  );
}

/* ---------- right bar, status bar ---------- */

const SideBar = styled.div`
  flex: 1;
  display: flex;
  flex-direction: column;
  gap: 2px;
  padding: 3px 0 0 2px;
  align-items: center;
`;
const SideBtn = styled.div`
  width: 58px;
  height: 58px;
  flex: none;
  display: flex;
  align-items: center;
  justify-content: center;
  border-radius: 6px;
  ${(p) => p.$on && css`border: 1px solid #b0aea9; background: linear-gradient(#dddbd9, #eeedeb);`}
`;
const SideRule = styled.div`
  width: 48px;
  height: 1px;
  margin: 4px 0 3px;
  flex: none;
  background: #d5d3d0;
`;
const StatusBar = styled.div`
  height: 43px;
  flex: none;
  display: flex;
  justify-content: space-between;
  padding-top: 2px;
  border-top: 1px solid #cfcdca;
`;
const StatusPane = styled.div`
  width: 3172px;
  padding: 1px 0 0 1px;
  border: 1px solid #c6c4c0;
  line-height: 34px;
`;
const StatusLink = styled.a`
  display: block;
  width: 53px;
  height: 37px;
  color: #0000f5;
  border-bottom: 3px solid #0000f5;
`;
const GripButton = styled.div`
  width: 23px;
  height: 25px;
  margin-top: 7px;
  display: flex;
  align-items: center;
  justify-content: center;
  border: 1px solid #c6c4c0;
`;
const GripFace = styled.div`
  width: 19px;
  height: 21px;
  display: flex;
  align-items: center;
  justify-content: center;
  border: 1px solid #b5b3ae;
  border-radius: 5px;
  background: linear-gradient(#fff, #e8e7e5);
`;

/* ---------- dialog ---------- */

const Dialog = styled.div`
  position: absolute;
  left: 1099px;
  top: 24px;
  width: 982px;
  height: 1676px;
  display: flex;
  flex-direction: column;
  border-radius: 12px 12px 0 0;
  background: #f2f1f0;
  box-shadow: 0 12px 44px rgba(0, 0, 0, 0.62), 0 2px 10px rgba(0, 0, 0, 0.3);
`;
const TitleBar = styled.div`
  height: 56px;
  flex: none;
  display: flex;
  align-items: center;
  gap: 6px;
  padding: 1px 0 0 15px;
  border-radius: 12px 12px 0 0;
  background: linear-gradient(#5b594f, #4a4943 50%, #403f3a);
  box-shadow: inset 0 2px 1px rgba(255, 255, 255, 0.12);
  color: #dfdbd2;
  font-weight: 700;
`;
const TitleText = styled.div`
  margin-left: 19px;
  text-shadow: 0 -1px 1px #222;
`;
const DialogBody = styled.div`
  flex: 1;
  display: flex;
  flex-direction: column;
  padding: 21px 41px 73px 23px;
`;
const Heading = styled.div`
  height: 36px;
  margin-top: ${(p) => p.$mt || 0}px;
  font-weight: 700;
`;
const Form = styled.div`
  display: grid;
  grid-template-columns: ${(p) => p.$label}px 1fr;
  row-gap: 15px;
  padding-left: 26px;
  align-items: center;
`;
const CheckRow = styled.div`
  height: 28px;
  display: flex;
  align-items: ${(p) => (p.$top ? "flex-start" : "center")};
  padding: ${(p) => (p.$top ? "2px 0 0 2px" : 0)};
`;
const Check = styled.div`
  width: 14px;
  height: 14px;
  border: 1px solid #a3a19b;
  border-radius: 3px;
  background: #fff;
`;
const Footer = styled.div`
  margin-top: auto;
  padding-left: 25px;
  display: grid;
  grid-template-columns: 565px 84px 217px;
  column-gap: 13.500px;
  row-gap: 42px;
  align-items: center;
`;
const StatusLabel = styled.div`
  grid-column: span 2;
`;
const Progress = styled.div`
  height: 39px;
  display: flex;
  align-items: center;
  border: 1px solid #cfcdca;
  border-top: 2px solid #b9b7b1;
  border-bottom-color: #fff;
  border-radius: 9px;
  background: #e3e2e0;
`;
const Chunk = styled.div`
  width: 4px;
  height: 23px;
  border-radius: 2px;
  border: 1px solid #c8572c;
  background: #f58a5e;
`;
const ProgressText = styled.div`
  flex: 1;
  display: flex;
  justify-content: center;
`;

const Label = ({ w, children }) => <div><Fit w={w}>{children}</Fit></div>;

function AlignmentDialog() {
  return (
    <Dialog>
      <TitleBar>
        <Svg w={32} h={34}>
          <circle cx="16" cy="17" r="15.500" fill="url(#redBtn)" stroke="#35342f" strokeWidth="1.500" />
          <path d="M10.500 11.500 L21.500 22.500 M21.500 11.500 L10.500 22.500" stroke="#3a2018" strokeWidth="2" />
        </Svg>
        <Svg w={32} h={34}>
          <circle cx="16" cy="17" r="15" fill="#7a7972" stroke="#35342f" strokeWidth="1.500" />
          <rect x="9.500" y="11" width="12.500" height="12.500" fill="none" stroke="#35342f" strokeWidth="1.800" />
        </Svg>
        <TitleText><Fit w={274}>Alignment Options</Fit></TitleText>
      </TitleBar>
      <DialogBody>
        <Heading><Fit w={621}>Group Selection Criteria for use in Alignment</Fit></Heading>
        <Form $label={597}>
          <Label w={570}>{"Group must contain at least  [X] good peaks"}</Label>
          <Spin h={39}><Fit w={100}>1 peaks</Fit></Spin>
          <Label w={585}>Limit total number of groups in alignment to</Label>
          <Spin h={39}><Fit w={164}>1000 groups</Fit></Spin>
          <Label w={306}>Peak Grouping Window</Label>
          <Spin h={39}><Fit w={111}>10 scans</Fit></Spin>
          <CheckRow><Fit w={368}>Alignment w.r.t Expected Rt</Fit></CheckRow>
          <CheckRow $top><Check /></CheckRow>
        </Form>
        <Heading $mt={34}><Fit w={205}>Peak Selection</Fit></Heading>
        <Form $label={352}>
          <Label w={325}>Minumum Peak Intensity</Label>
          <Spin h={39}><Fit w={106}>5000.00</Fit></Spin>
          <Label w={324}>Minimum Peak S/N Ratio</Label>
          <Spin h={39}><Fit w={16}>2</Fit></Spin>
          <Label w={280}>Minimum Peak Width</Label>
          <Spin h={39}><Fit w={95}>3 scans</Fit></Spin>
          <Label w={341}>Peak Detection Algorithm</Label>
          <Combo $h={39}><Fit w={369}>Compound Database Search</Fit><Arrows /></Combo>
          <Label w={212}>Select Database</Label>
          <Combo $h={39}><DbIcon /><Fit w={125}>KNOWNS</Fit><Arrows /></Combo>
        </Form>
        <Heading $mt={57}><Fit w={292}>Alignment Algorithm</Fit></Heading>
        <Form $label={436}>
          <Label w={277}>Alignment Algorithm</Label>
          <Combo $h={39}><Fit w={98}>Poly Fit</Fit><Arrows /></Combo>
          <Label w={424}>Maximum Number of Itterations</Label>
          <Spin h={39}><Fit w={32}>10</Fit></Spin>
          <Label w={250}>Polynomial Degree</Label>
          <Spin h={39} dim><Fit w={16}>5</Fit></Spin>
        </Form>
        <Footer>
          <StatusLabel><Fit w={84}>Status</Fit></StatusLabel>
          <Push $w={217} $h={38}><Fit w={199}>Undo Aligment</Fit></Push>
          <Progress>
            <Chunk />
            <ProgressText><Fit w={41}>0%</Fit></ProgressText>
          </Progress>
          <Push $w={84} $h={39} $primary><Fit w={68}>Align</Fit></Push>
          <Push $w={217} $h={39}><Fit w={88}>Cancel</Fit></Push>
        </Footer>
      </DialogBody>
    </Dialog>
  );
}

const MENUS = [["F", 15, "ile", 31], ["W", 27, "idgets", 82], ["H", 20, "elp", 41]];
const ACTIONS = [
  ["Open", 71, OpenIcon, 4], ["Align", 68, AlignIcon, 4], ["Peaks", 74, PeaksIcon, 1],
  ["Match", 80, MatchIcon, 1], ["Options", 105, OptionsIcon, 9], ["Polly", 63, PollyIcon, 1],
];
const SIDE = [FoldersIcon, MoleculeIcon, MzBarsIcon, SlidersIcon, XyIcon, CurvesIcon, C13Icon, MoleculeZoomIcon, PeakZoomIcon, BubbleIcon, QIcon, GridIcon, null, BookmarkIcon, PeaksIcon];

export default function App() {
  return (
    <Window>
      <GlobalStyle />
      <Defs />
      <MenuBar>
        {MENUS.map(([a, aw, b, bw]) => (
          <MenuItem key={b}><Mnemonic><Fit w={aw}>{a}</Fit></Mnemonic><Fit w={bw}>{b}</Fit></MenuItem>
        ))}
      </MenuBar>
      <TopBar>
        <Actions>
          {ACTIONS.map(([t, w, Icon, gap]) => (
            <ActionItem key={t} $gap={gap}><Icon /><Fit w={w}>{t}</Fit></ActionItem>
          ))}
        </Actions>
        <Controls>
          <Fit w={93}>Charge</Fit>
          <Spin w={65} pad={7}><Fit w={15}>1</Fit></Spin>
          <Combo $w={317}><Fit w={112}>AreaTop</Fit><Arrows /></Combo>
          <Fit w={67}>[m/z]</Fit>
          <Field $w={263} $pad={4}><Fit w={187}>808.11914062</Fit></Field>
          <Fit w={36}>+/-</Fit>
          <Spin w={235}><Fit w={122}>5.000000</Fit></Spin>
          <Combo $w={82} $padR={5}><Fit w={59}>ppm</Fit><Arrows /></Combo>
        </Controls>
      </TopBar>
      <Body>
        <Dock>
          <TabStrip>
            <Tab $h={125}><TabText>Samples</TabText></Tab>
            <Tab $h={173} $on><TabText>Compounds</TabText></Tab>
            <TabRest />
          </TabStrip>
          <Pane>
            <DbRow>
              <Combo $w={473} $h={57}><DbIcon /><Fit w={125}>KNOWNS</Fit><Arrows /></Combo>
              <IconCell $ml={7}><OpenIcon /></IconCell>
              <IconCell $ml={12}><DiskIcon /></IconCell>
            </DbRow>
            <Browser>
              <Filter $h={40} $pad={5}><Fit w={305}>Compound Name Filter</Fit></Filter>
              <TableFrame>
                <Table>
                  <Head>
                    <HeadCell><Fit w={72}>name</Fit><SortMark><Tri $s={4} /></SortMark></HeadCell>
                    <HeadCell><Fit w={50}>m/z</Fit></HeadCell>
                    <HeadCell $last><Fit w={22}>rt</Fit></HeadCell>
                  </Head>
                  {ROWS.map(([name, mz, rt, tone], i) => (
                    <Row key={i} $tone={tone}>
                      <Name>{name.replace("…", "")}{name.endsWith("…") && <Dots>...</Dots>}</Name>
                      <span>{mz}</span>
                      <span>{rt}</span>
                    </Row>
                  ))}
                </Table>
                <VScroll>
                  <ScrollCap><Tri $s={2} $c="#aaa" /></ScrollCap>
                  <VThumb><Grip $v /></VThumb>
                  <ScrollCap><Tri $s={2} $down /></ScrollCap>
                </VScroll>
              </TableFrame>
              <HScroll>
                <ScrollCap $h><SideTri $left /></ScrollCap>
                <HThumb><Grip /></HThumb>
                <ScrollCap $h><SideTri /></ScrollCap>
              </HScroll>
            </Browser>
          </Pane>
        </Dock>
        <Center>
          <ChartTools>
            <ZoomIcon /><StarIcon /><TxtIcon /><ToolRule /><IntegralIcon /><SigmaIcon /><ArrowIcon /><ArrowIcon flip />
          </ChartTools>
          <ChartFrame><Chart /></ChartFrame>
        </Center>
        <SideBar>
          {SIDE.map((Icon, i) => (Icon ? <SideBtn key={i} $on={i === 1}><Icon /></SideBtn> : <SideRule key={i} />))}
        </SideBar>
      </Body>
      <StatusBar>
        <StatusPane><StatusLink><Fit w={53}>UTP</Fit></StatusLink></StatusPane>
        <GripButton><GripFace>
          <Svg w={12} h={14}><path d="M1 1 h5 v5 h-5 Z M6 8 h5 v5 h-5 Z M3 6 L8 9" fill="none" stroke="#777" strokeWidth="1.500" /></Svg>
        </GripFace></GripButton>
      </StatusBar>
      <AlignmentDialog />
    </Window>
  );
}
